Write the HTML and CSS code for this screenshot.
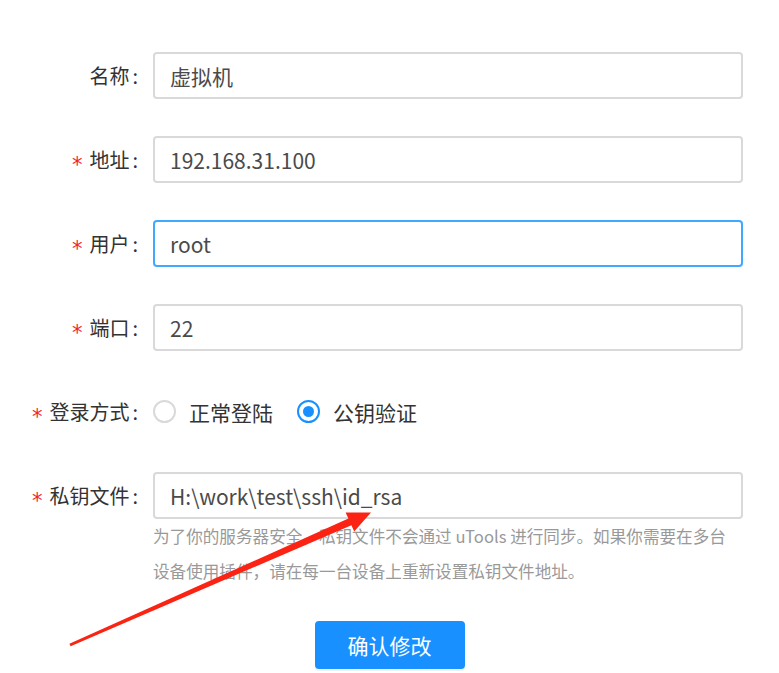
FILE: index.html
```html
<!DOCTYPE html>
<html lang="zh-CN">
<head>
    <meta charset="UTF-8">
    <meta name="viewport" content="width=device-width, initial-scale=1.0">
    <title>编辑主机</title>
    <link rel="stylesheet" href="styles.css">
</head>
<body>
    <div class="page">
        <form class="form">
            <div class="form-item">
                <label class="form-label" for="name">名称</label>
                <div class="form-control">
                    <input class="input" id="name" type="text" value="虚拟机">
                </div>
            </div>
            <div class="form-item">
                <label class="form-label required" for="host">地址</label>
                <div class="form-control">
                    <input class="input" id="host" type="text" value="192.168.31.100">
                </div>
            </div>
            <div class="form-item">
                <label class="form-label required" for="user">用户</label>
                <div class="form-control">
                    <input class="input input-focus" id="user" type="text" value="root">
                </div>
            </div>
            <div class="form-item">
                <label class="form-label required" for="port">端口</label>
                <div class="form-control">
                    <input class="input" id="port" type="text" value="22">
                </div>
            </div>
            <div class="form-item">
                <label class="form-label required">登录方式</label>
                <div class="form-control radios">
                    <label class="radio"><span class="radio-dot"></span>正常登陆</label>
                    <label class="radio checked"><span class="radio-dot"></span>公钥验证</label>
                </div>
            </div>
            <div class="form-item form-item-last">
                <label class="form-label required" for="key">私钥文件</label>
                <div class="form-control">
                    <input class="input" id="key" type="text" value="H:\work\test\ssh\id_rsa">
                    <div class="help">为了你的服务器安全，私钥文件不会通过 uTools 进行同步。如果你需要在多台<br>设备使用插件，请在每一台设备上重新设置私钥文件地址。</div>
                </div>
            </div>
            <div class="form-actions">
                <button class="btn-primary" type="button">确认修改</button>
            </div>
        </form>

        <!-- annotation arrow drawn over the form -->
        <svg class="arrow" viewBox="0 0 779 673" width="779" height="673">
            <polygon fill="#fb2414" points="69.4,643.8 348.4,518.6 345.6,512.4 371,512.6 354.2,531.4 351.4,525.2 70.6,646.2"/>
        </svg>
    </div>
</body>
</html>
```

FILE: styles.css
```css
body {
    margin: 0;
    background-color: #ffffff;
    font-family: "Noto Sans CJK SC", "Noto Sans", sans-serif;
}
.page {
    position: relative;
    width: 779px;
    height: 673px;
    overflow: hidden;
}
.form {
    padding-top: 52px;
}
.form-item {
    display: flex;
    align-items: flex-start;
    margin-bottom: 37px;
}
.form-item-last {
    margin-bottom: 32px;
}
.form-label {
    flex: none;
    width: 153px;
    height: 47px;
    box-sizing: border-box;
    padding-right: 15px;
    text-align: right;
    line-height: 47px;
    font-size: 20px;
    color: #333333;
    white-space: nowrap;
}
.form-label::after {
    content: ":";
    margin-left: 3px;
}
.required::before {
    content: "*";
    margin-right: 7px;
    color: #f5222d;
    font-family: "DejaVu Sans", sans-serif;
    font-size: 21px;
    line-height: 1;
    vertical-align: -4px;
}
.form-control {
    width: 590px;
}
.input {
    display: block;
    width: 100%;
    height: 47px;
    box-sizing: border-box;
    padding: 0 15px;
    border: 2px solid #d9d9d9;
    border-radius: 4px;
    font-family: inherit;
    font-size: 21px;
    color: #4a4a4a;
    outline: none;
}
.input-focus {
    border-color: #40a9ff;
}
.radios {
    display: flex;
    align-items: center;
    height: 47px;
}
.radio {
    display: flex;
    align-items: center;
    margin-right: 24px;
    font-size: 21px;
    color: #333333;
}
.radio-dot {
    position: relative;
    width: 23px;
    height: 23px;
    box-sizing: border-box;
    margin-right: 13px;
    border: 2px solid #d9d9d9;
    border-radius: 50%;
}
.checked .radio-dot {
    border-color: #1890ff;
}
.checked .radio-dot::after {
    content: "";
    position: absolute;
    left: 4px;
    top: 4px;
    width: 11px;
    height: 11px;
    border-radius: 50%;
    background-color: #1890ff;
}
.help {
    font-size: 16.6px;
    line-height: 35px;
    color: #999999;
}
.form-actions {
    display: flex;
    justify-content: center;
}
.btn-primary {
    width: 150px;
    height: 48px;
    border: none;
    border-radius: 4px;
    background-color: #1890ff;
    box-shadow: 0 2px 0 rgba(0, 0, 0, 0.05);
    color: #ffffff;
    font-family: inherit;
    font-size: 21px;
    cursor: pointer;
}
.arrow {
    position: absolute;
    left: 0;
    top: 0;
    pointer-events: none;
}
```
